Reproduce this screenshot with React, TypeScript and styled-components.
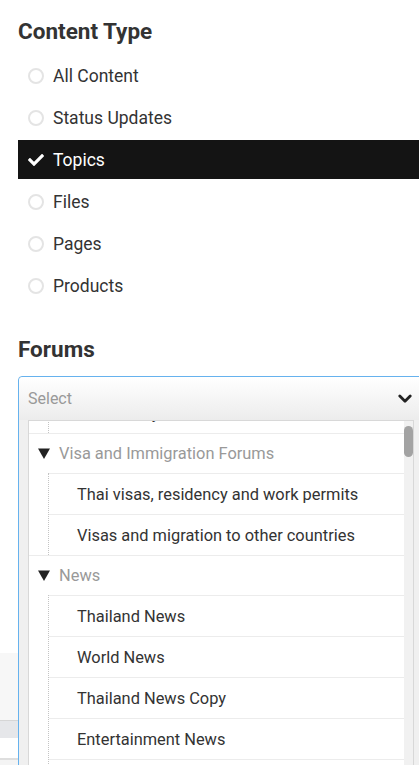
import React from "react";
import styled, { createGlobalStyle } from "styled-components";
import { FaCheck } from "react-icons/fa";

const GlobalStyle = createGlobalStyle`
  html, body {
    margin: 0;
    padding: 0;
    background: #fff;
    overflow: hidden;
    font-family: Roboto, "Noto Sans", Arial, sans-serif;
    color: #333;
  }
`;

const Page = styled.div`
  width: 419px;
  height: 765px;
  overflow: hidden;
`;

const Section = styled.div`
  padding-left: 18px;
`;

const Heading = styled.h3<{ $top: number }>`
  margin: 0;
  font-size: 22.5px;
  line-height: 24px;
  font-weight: 700;
  color: #333;
  padding-top: ${({ $top }) => $top}px;
`;

const OptionList = styled.ul`
  list-style: none;
  margin: 13px 0 0;
  padding: 0;
  display: flex;
  flex-direction: column;
  gap: 3px;
`;

const Option = styled.li<{ $active?: boolean }>`
  height: 39px;
  display: flex;
  align-items: center;
  gap: 9px;
  padding-left: 10px;
  font-size: 17.5px;
  background: ${({ $active }) => ($active ? "#141414" : "transparent")};
  color: ${({ $active }) => ($active ? "#fff" : "#333")};
`;

const Radio = styled.span`
  width: 16px;
  height: 16px;
  box-sizing: border-box;
  border-radius: 50%;
  border: 2px solid #e4e4e4;
`;

const CheckMark = styled.span`
  width: 16px;
  display: flex;
  justify-content: center;
  color: #fff;
`;

const Field = styled.div`
  position: relative;
  margin-top: 15px;
  height: 44px;
`;

const Panel = styled.div`
  position: absolute;
  top: 0;
  left: 0;
  right: -4px;
  border: 1px solid #66b2ee;
  border-radius: 4px 0 0 0;
  background: #f0f0f0;
  z-index: 2;
`;

const SelectHead = styled.div`
  height: 43px;
  display: flex;
  align-items: center;
  justify-content: space-between;
  padding: 0 10px 0 9px;
  background: linear-gradient(#ffffff, #ececec);
  border-radius: 4px 0 0 0;
  font-size: 16px;
  color: #999;
`;

const Drop = styled.div`
  padding: 0 8px 0 9px;
`;

const ListBox = styled.div`
  height: 360px;
  display: flex;
  border: 1px solid #d8d8d8;
  background: #fff;
  overflow: hidden;
`;

const Rows = styled.ul`
  flex: 1;
  list-style: none;
  margin: -29px 0 0;
  padding: 0;
`;

const Group = styled.li`
  border-bottom: 1px solid #ececec;
`;

const GroupHead = styled.div`
  height: 39px;
  display: flex;
  align-items: center;
  gap: 9px;
  padding-left: 9px;
  font-size: 16.4px;
  color: #999;
`;

const Children = styled.ul`
  list-style: none;
  margin: 0 0 0 19px;
  padding: 0;
  border-left: 1px dotted #c4c4c4;
`;

const Child = styled.li`
  height: 40px;
  display: flex;
  align-items: center;
  padding-left: 28px;
  border-top: 1px solid #ececec;
  font-size: 16.4px;
  color: #333;
`;

const Track = styled.div`
  width: 9px;
  background: #f1f1f1;
`;

const Thumb = styled.div`
  margin-top: 5px;
  height: 31px;
  border-radius: 5px;
  background: #a3a3a3;
`;

const Behind = styled.div`
  margin-top: 233px;
`;

const ResultsBar = styled.div`
  height: 67px;
  background: #f7f7f7;
  border-bottom: 1px solid #d6d6d6;
`;

const ToolBar = styled.div`
  height: 17px;
  background: #e6e7ea;
`;

const Footer = styled.div`
  margin-top: 20px;
  height: 40px;
  border-top: 2px solid #dedede;
  background: #f4f4f4;
`;

const options = ["All Content", "Status Updates", "Topics", "Files", "Pages", "Products"];

const groups = [
  { title: null, items: ["Phuket City"] },
  {
    title: "Visa and Immigration Forums",
    items: ["Thai visas, residency and work permits", "Visas and migration to other countries"],
  },
  {
    title: "News",
    items: ["Thailand News", "World News", "Thailand News Copy", "Entertainment News", "Business News"],
  },
];

const Chevron = () => (
  <svg width="14" height="10" viewBox="0 0 14 10">
    <polyline points="1.8,2 7,7.2 12.2,2" fill="none" stroke="#222" strokeWidth="2.8" strokeLinecap="round" strokeLinejoin="round" />
  </svg>
);

const Caret = () => (
  <svg width="12" height="11" viewBox="0 0 12 11">
    <polygon points="0,0.5 12,0.5 6,11" fill="#222" />
  </svg>
);

export default function App() {
  return (
    <Page>
      <GlobalStyle />
      <Section>
        <Heading $top={19}>Content Type</Heading>
        <OptionList>
          {options.map((o) =>
            o === "Topics" ? (
              <Option key={o} $active>
                <CheckMark><FaCheck size={16} /></CheckMark>
                {o}
              </Option>
            ) : (
              <Option key={o}>
                <Radio />
                {o}
              </Option>
            )
          )}
        </OptionList>
        <Heading $top={32}>Forums</Heading>
        <Field>
          <Panel>
            <SelectHead>
              Select
              <Chevron />
            </SelectHead>
            <Drop>
              <ListBox>
                <Rows>
                  {groups.map((g, i) => (
                    <Group key={i}>
                      {g.title && (
                        <GroupHead>
                          <Caret />
                          {g.title}
                        </GroupHead>
                      )}
                      <Children>
                        {g.items.map((it) => (
                          <Child key={it}>{it}</Child>
                        ))}
                      </Children>
                    </Group>
                  ))}
                </Rows>
                <Track>
                  <Thumb />
                </Track>
              </ListBox>
            </Drop>
          </Panel>
        </Field>
      </Section>
      <Behind>
        <ResultsBar />
        <ToolBar />
        <Footer />
      </Behind>
    </Page>
  );
}
